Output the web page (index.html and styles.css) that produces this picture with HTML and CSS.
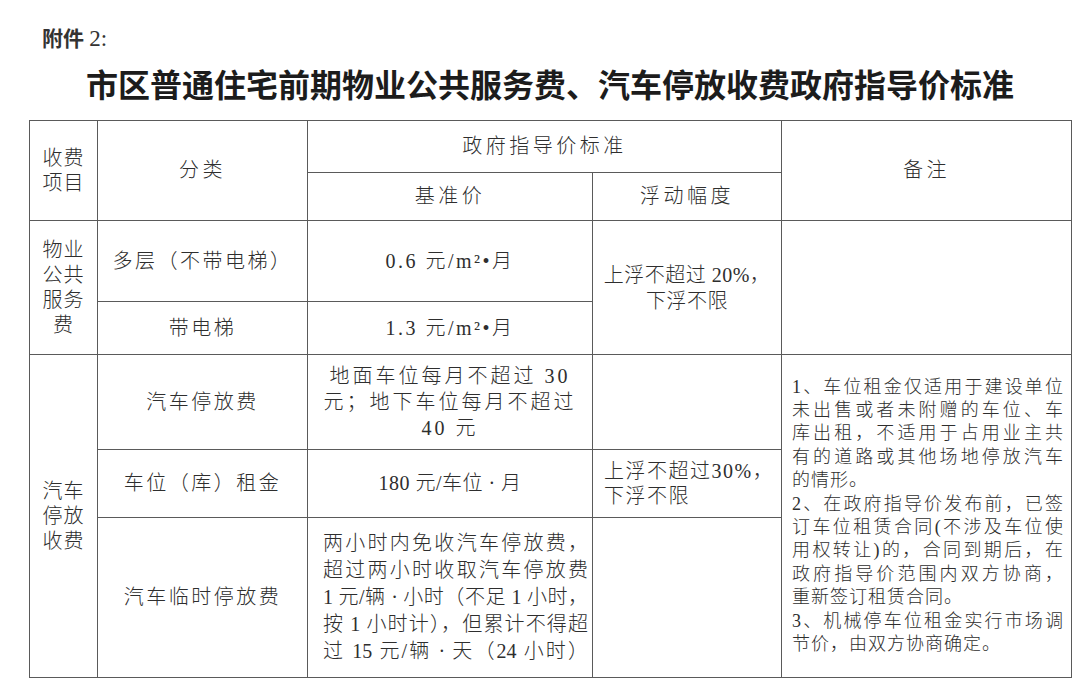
FILE: index.html
```html
<!DOCTYPE html>
<html lang="zh-CN">
<head>
<meta charset="utf-8">
<title>市区普通住宅前期物业公共服务费、汽车停放收费政府指导价标准</title>
<link rel="stylesheet" href="styles.css">
</head>
<body>
<div class="page">
  <div class="attach"><span class="attach-cjk">附件</span> <span class="attach-num">2:</span></div>
  <h1 class="title">市区普通住宅前期物业公共服务费、汽车停放收费政府指导价标准</h1>
  <table class="fee-table">
    <colgroup>
      <col class="c1"><col class="c2"><col class="c3"><col class="c4"><col class="c5">
    </colgroup>
    <tr class="r-h1">
      <th rowspan="2" class="item">收费<br>项目</th>
      <th rowspan="2">分类</th>
      <th colspan="2">政府指导价标准</th>
      <th rowspan="2">备注</th>
    </tr>
    <tr class="r-h2">
      <th>基准价</th>
      <th>浮动幅度</th>
    </tr>
    <tr class="r-1">
      <td rowspan="2" class="item">物业<br>公共<br>服务<br>费</td>
      <td>多层（不带电梯）</td>
      <td>0.6 元/m²•月</td>
      <td rowspan="2" class="float">上浮不超过 20%，<br>下浮不限</td>
      <td rowspan="2"></td>
    </tr>
    <tr class="r-2">
      <td>带电梯</td>
      <td>1.3 元/m²•月</td>
    </tr>
    <tr class="r-3">
      <td rowspan="3" class="item">汽车<br>停放<br>收费</td>
      <td>汽车停放费</td>
      <td class="park">地面车位每月不超过 30<br>元；地下车位每月不超过<br>40 元</td>
      <td></td>
      <td rowspan="3" class="remark">
        <span class="ln j">1、车位租金仅适用于建设单位</span>
        <span class="ln j">未出售或者未附赠的车位、车</span>
        <span class="ln j">库出租，不适用于占用业主共</span>
        <span class="ln j">有的道路或其他场地停放汽车</span>
        <span class="ln">的情形。</span>
        <span class="ln j">2、在政府指导价发布前，已签</span>
        <span class="ln j">订车位租赁合同(不涉及车位使</span>
        <span class="ln j">用权转让)的，合同到期后，在</span>
        <span class="ln j">政府指导价范围内双方协商，</span>
        <span class="ln">重新签订租赁合同。</span>
        <span class="ln j">3、机械停车位租金实行市场调</span>
        <span class="ln">节价，由双方协商确定。</span>
      </td>
    </tr>
    <tr class="r-4">
      <td>车位（库）租金</td>
      <td class="rent">180 元/车位 · 月</td>
      <td class="float-left">上浮不超过30%，<br>下浮不限</td>
    </tr>
    <tr class="r-5">
      <td>汽车临时停放费</td>
      <td class="temp">
        <span class="ln j">两小时内免收汽车停放费，</span>
        <span class="ln j">超过两小时收取汽车停放费</span>
        <span class="ln j">1 元/辆 · 小时（不足 1 小时，</span>
        <span class="ln j">按 1 小时计），但累计不得超</span>
        <span class="ln j">过 15 元/辆 · 天（24 小时）</span>
      </td>
      <td></td>
    </tr>
  </table>
</div>
</body>
</html>
```
FILE: styles.css
```css
body {
  margin: 0;
  background: #ffffff;
  color: #2b2b2b;
  font-family: "Liberation Serif", "Noto Sans CJK SC", serif;
}

.page {
  width: 1042px;
  padding: 24px 0 0 29px;
}

.attach {
  margin-left: 13px;
  font-size: 21px;
  line-height: 26px;
  color: #333;
}

.attach-cjk {
  font-family: "Noto Sans CJK SC", sans-serif;
  font-weight: bold;
}

.attach-num {
  font-size: 23px;
}

.title {
  margin: 11px 0 0;
  font-family: "Noto Sans CJK SC", sans-serif;
  font-weight: 700;
  font-size: 32px;
  line-height: 40px;
  text-align: center;
  color: #1c1c1c;
}

.fee-table {
  margin-top: 17px;
  width: 1042px;
  border-collapse: collapse;
  table-layout: fixed;
}

.c1 { width: 68px; }
.c2 { width: 210px; }
.c3 { width: 285px; }
.c4 { width: 189px; }
.c5 { width: 290px; }

.fee-table th,
.fee-table td {
  border: 1px solid #5a5a5a;
  padding: 0;
  text-align: center;
  vertical-align: middle;
  font-weight: 300;
  font-size: 20px;
  line-height: 25px;
  letter-spacing: 2.5px;
  color: #2e2e2e;
}

.fee-table th {
  letter-spacing: 3.5px;
}

.r-h1 { height: 52px; }
.r-h2 { height: 48px; }
.r-1 { height: 81px; }
.r-2 { height: 53px; }
.r-3 { height: 95px; }
.r-4 { height: 68px; }
.r-5 { height: 160px; }

.fee-table .item {
  letter-spacing: 1px;
  line-height: 25px;
}

.fee-table .float {
  letter-spacing: 0.5px;
  line-height: 26px;
}

.fee-table .float-left {
  text-align: left;
  padding-left: 11px;
  letter-spacing: 1.5px;
  line-height: 25px;
}

.fee-table .park {
  letter-spacing: 3px;
  line-height: 26px;
}

.fee-table .rent {
  letter-spacing: 0.5px;
}

.ln {
  display: block;
  white-space: nowrap;
}

.j {
  text-align: justify;
  text-align-last: justify;
}

.fee-table .temp {
  text-align: left;
  padding-left: 15px;
  letter-spacing: 0;
  line-height: 27px;
}

.temp .ln {
  width: 265px;
}

.fee-table .remark {
  text-align: left;
  padding-left: 10px;
  font-size: 18px;
  line-height: 23.4px;
  letter-spacing: 1px;
}

.remark .ln {
  width: 272px;
}
```
